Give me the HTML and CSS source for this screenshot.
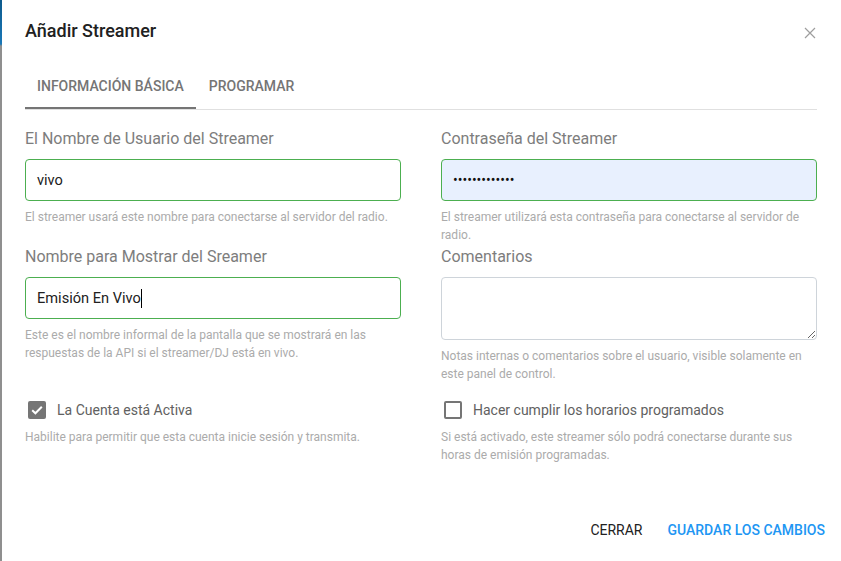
FILE: index.html
```html
<!DOCTYPE html>
<html lang="es">
<head>
<meta charset="utf-8">
<title>Añadir Streamer</title>
<link rel="stylesheet" href="styles.css">
</head>
<body>
<div class="screen">
  <div class="backdrop"></div>
  <div class="dialog">
    <div class="header">
      <h1 class="title">Añadir Streamer</h1>
      <button class="close" aria-label="Cerrar">
        <svg width="12" height="12" viewBox="0 0 12 12"><path d="M1 1L11 11M11 1L1 11" stroke="#9e9e9e" stroke-width="1.2" fill="none"/></svg>
      </button>
    </div>
    <div class="tabs">
      <div class="tab active">INFORMACIÓN BÁSICA</div>
      <div class="tab">PROGRAMAR</div>
    </div>
    <div class="form">
      <div class="group">
        <label class="label">El Nombre de Usuario del Streamer</label>
        <div class="field valid">vivo</div>
        <div class="help">El streamer usará este nombre para conectarse al servidor del radio.</div>
      </div>
      <div class="group">
        <label class="label">Contraseña del Streamer</label>
        <div class="field valid autofill"><span class="dots">•••••••••••••</span></div>
        <div class="help">El streamer utilizará esta contraseña para conectarse al servidor de radio.</div>
      </div>
      <div class="group">
        <label class="label">Nombre para Mostrar del Sreamer</label>
        <div class="field valid">Emisión En Vivo<span class="caret"></span></div>
        <div class="help">Este es el nombre informal de la pantalla que se mostrará en las respuestas de la API si el streamer/DJ está en vivo.</div>
      </div>
      <div class="group">
        <label class="label">Comentarios</label>
        <textarea class="textarea"></textarea>
        <div class="help">Notas internas o comentarios sobre el usuario, visible solamente en este panel de control.</div>
      </div>
      <div class="group check-group">
        <div class="check-row">
          <span class="box checked">
            <svg width="18" height="18" viewBox="0 0 18 18"><path d="M4.2 9.2L7.4 12.3L13.8 5.8" stroke="#fff" stroke-width="2" fill="none"/></svg>
          </span>
          <span class="check-label">La Cuenta está Activa</span>
        </div>
        <div class="help">Habilite para permitir que esta cuenta inicie sesión y transmita.</div>
      </div>
      <div class="group check-group">
        <div class="check-row">
          <span class="box"></span>
          <span class="check-label">Hacer cumplir los horarios programados</span>
        </div>
        <div class="help">Si está activado, este streamer sólo podrá conectarse durante sus horas de emisión programadas.</div>
      </div>
    </div>
    <div class="footer">
      <button class="btn plain">CERRAR</button>
      <button class="btn primary">GUARDAR LOS CAMBIOS</button>
    </div>
  </div>
</div>
</body>
</html>
```

FILE: styles.css
```css
* { box-sizing: border-box; }
html, body { margin: 0; padding: 0; }
body {
  width: 841px;
  height: 561px;
  overflow: hidden;
  background: #fff;
  font-family: Roboto, "Liberation Sans", Arial, sans-serif;
  color: #212121;
}
.screen {
  display: flex;
  height: 561px;
}
.backdrop {
  width: 2px;
  flex: none;
  background: linear-gradient(to bottom, #0d5a8c 0, #1a78b8 44px, #8f8f8f 46px, #8f8f8f 100%);
}
.dialog {
  flex: 1;
  padding: 0 22px 0 23px;
  display: flex;
  flex-direction: column;
}
.header {
  display: flex;
  align-items: center;
  justify-content: space-between;
  padding-top: 17px;
  height: 45px;
}
.title {
  margin: 0;
  font-size: 18px;
  font-weight: 500;
  line-height: 28px;
  color: #212121;
}
.close {
  border: 0;
  background: none;
  padding: 0;
  width: 12px;
  height: 12px;
  margin-right: 3px;
  margin-top: 4px;
  display: flex;
}
.tabs {
  margin-top: 17px;
  display: flex;
  height: 48px;
  border-bottom: 1px solid #e0e0e0;
  margin-right: 2px;
}
.tab {
  padding: 0 12px;
  font-size: 14px;
  font-weight: 500;
  line-height: 48px;
  color: #757575;
  margin-right: 1px;
}
.tab.active {
  box-shadow: inset 0 -2px 0 #757575;
}
.form {
  margin-top: 17px;
  display: grid;
  grid-template-columns: 376px 376px;
  column-gap: 40px;
  row-gap: 1px;
  align-items: start;
}
.label {
  display: block;
  font-size: 16px;
  font-weight: 400;
  line-height: 24px;
  color: #7d7d7d;
  margin-bottom: 8px;
}
.field {
  height: 42px;
  border: 1px solid #ced4da;
  border-radius: 4px;
  padding: 0 11px;
  font-size: 14.6px;
  line-height: 40px;
  color: #212121;
  display: flex;
  align-items: center;
}
.field.valid { border-color: #4caf50; }
.field.autofill { background: #e8f0fe; }
.dots {
  font-size: 14px;
  letter-spacing: 0;
  color: #111;
}
.caret {
  display: inline-block;
  width: 1px;
  height: 19px;
  background: #000;
}
.textarea {
  display: block;
  width: 376px;
  height: 63px;
  border: 1px solid #ced4da;
  border-radius: 4px;
  padding: 8px 11px;
  font-family: inherit;
  font-size: 15px;
  resize: vertical;
  margin: 0;
}
.help {
  margin-top: 7px;
  font-size: 12px;
  font-weight: 400;
  line-height: 18px;
  color: #ababab;
}
.check-group { margin-top: 14px; }
.check-row {
  display: flex;
  align-items: center;
  height: 24px;
  margin-left: 3px;
}
.box {
  width: 18px;
  height: 18px;
  border: 2px solid #757575;
  border-radius: 2px;
  flex: none;
  margin-right: 11px;
}
.box.checked {
  background: #757575;
  border: 0;
}
.box svg { display: block; }
.check-label {
  font-size: 14px;
  color: #616161;
}
.check-group .help { margin-top: 6px; }
.footer {
  margin-top: auto;
  margin-bottom: 19px;
  display: flex;
  justify-content: flex-end;
  align-items: center;
  gap: 25px;
  margin-right: -6px;
}
.btn {
  border: 0;
  background: none;
  padding: 0;
  font-family: inherit;
  font-size: 14px;
  font-weight: 500;
  line-height: 24px;
  color: #212121;
}
.btn.plain { font-weight: 400; }
.btn.primary { color: #2196f3; }
```
